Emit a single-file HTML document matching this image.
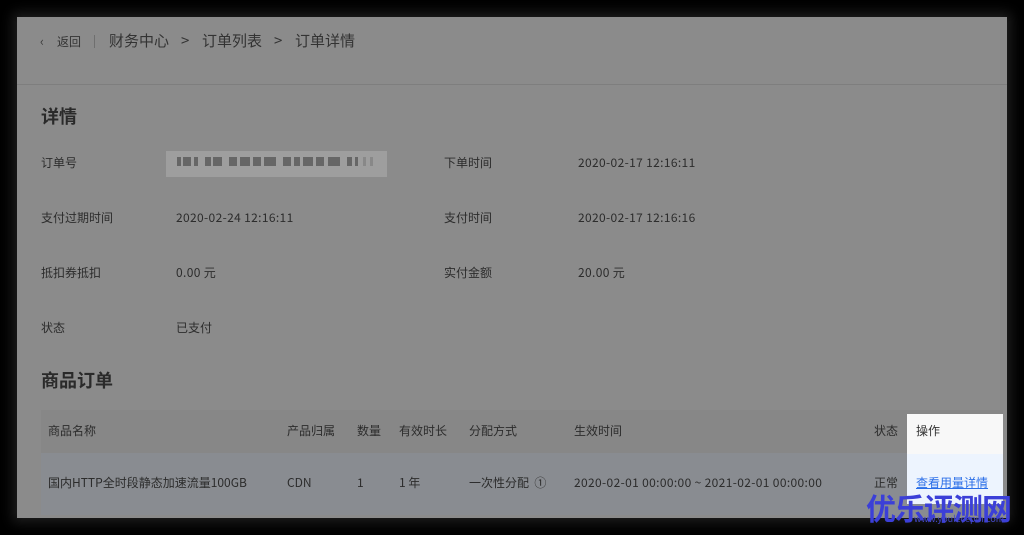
<!DOCTYPE html>
<html><head><meta charset="utf-8"><style>
*{margin:0;padding:0;box-sizing:border-box}
body{width:1024px;height:535px;background:#000;position:relative;overflow:hidden;font-family:"Noto Sans CJK SC","Liberation Sans",sans-serif;color:#2c2c2c}
.page{position:absolute;left:17px;top:17px;width:990px;height:501px;background:#8b8b8b;box-shadow:0 0 12px 4px rgba(40,40,40,.8)}
.a{position:absolute;white-space:nowrap;line-height:18px}
.s12{font-size:12px}
.n{letter-spacing:0.35px}
.r{position:absolute;top:157px;height:9px;background:#666}
</style></head><body>
<div class="page"></div>
<div class="a" style="left:40px;top:32px;font-size:13px;color:#3a3a3a">&#8249;</div>
<div class="a s12" style="left:57px;top:33px;color:#333">返回</div>
<div class="a" style="left:94px;top:35px;width:1px;height:13px;background:#6f6f6f"></div>
<div class="a" style="left:109px;top:32px;font-size:15px;color:#333">财务中心</div>
<div class="a" style="left:181px;top:32px;font-size:15px;color:#333">&gt;</div>
<div class="a" style="left:202px;top:32px;font-size:15px;color:#333">订单列表</div>
<div class="a" style="left:274px;top:32px;font-size:15px;color:#333">&gt;</div>
<div class="a" style="left:295px;top:32px;font-size:15px;color:#333">订单详情</div>
<div class="a" style="left:17px;top:84px;width:990px;height:1px;background:#7e7e7e"></div>
<div class="a" style="left:41px;top:105px;font-size:18px;font-weight:bold;color:#2a2a2a;line-height:22px">详情</div>
<div class="a" style="left:166px;top:151px;width:221px;height:26px;background:#9e9e9e"></div>
<div class="r" style="left:177px;width:4px"></div><div class="r" style="left:183px;width:8px"></div><div class="r" style="left:194px;width:4px"></div>
<div class="r" style="left:205px;width:6px"></div><div class="r" style="left:213px;width:9px"></div>
<div class="r" style="left:229px;width:8px"></div><div class="r" style="left:240px;width:10px"></div><div class="r" style="left:253px;width:8px"></div><div class="r" style="left:264px;width:12px"></div>
<div class="r" style="left:283px;width:8px"></div><div class="r" style="left:294px;width:6px"></div><div class="r" style="left:303px;width:10px"></div><div class="r" style="left:316px;width:8px"></div><div class="r" style="left:328px;width:12px"></div>
<div class="r" style="left:347px;width:5px"></div><div class="r" style="left:355px;width:3px"></div>
<div class="r" style="left:363px;width:3px;background:#888"></div><div class="r" style="left:370px;width:3px;background:#888"></div>
<div class="a s12" style="left:41px;top:154px">订单号</div>
<div class="a s12" style="left:444px;top:154px">下单时间</div>
<div class="a s12 n" style="left:578px;top:154px">2020-02-17 12:16:11</div>
<div class="a s12" style="left:41px;top:209px">支付过期时间</div>
<div class="a s12 n" style="left:176px;top:209px">2020-02-24 12:16:11</div>
<div class="a s12" style="left:444px;top:209px">支付时间</div>
<div class="a s12 n" style="left:578px;top:209px">2020-02-17 12:16:16</div>
<div class="a s12" style="left:41px;top:264px">抵扣券抵扣</div>
<div class="a s12 n" style="left:176px;top:264px">0.00 元</div>
<div class="a s12" style="left:444px;top:264px">实付金额</div>
<div class="a s12 n" style="left:578px;top:264px">20.00 元</div>
<div class="a s12" style="left:41px;top:319px">状态</div>
<div class="a s12" style="left:176px;top:319px">已支付</div>
<div class="a" style="left:41px;top:369px;font-size:18px;font-weight:bold;color:#2a2a2a;line-height:22px">商品订单</div>
<div class="a" style="left:41px;top:410px;width:962px;height:43px;background:#878787"></div>
<div class="a" style="left:41px;top:453px;width:962px;height:62px;background:#898c91"></div>
<div class="a" style="left:907px;top:414px;width:96px;height:40px;background:#f8f8f8"></div>
<div class="a" style="left:907px;top:454px;width:96px;height:50px;background:#edf4fe"></div>
<div class="a s12" style="left:48px;top:422px">商品名称</div>
<div class="a s12" style="left:287px;top:422px">产品归属</div>
<div class="a s12" style="left:357px;top:422px">数量</div>
<div class="a s12" style="left:399px;top:422px">有效时长</div>
<div class="a s12" style="left:469px;top:422px">分配方式</div>
<div class="a s12" style="left:574px;top:422px">生效时间</div>
<div class="a s12" style="left:874px;top:422px">状态</div>
<div class="a s12" style="left:916px;top:422px;color:#333">操作</div>
<div class="a s12" style="left:48px;top:474px">国内HTTP全时段静态加速流量100GB</div>
<div class="a s12" style="left:287px;top:474px">CDN</div>
<div class="a s12" style="left:357px;top:474px">1</div>
<div class="a s12" style="left:399px;top:474px">1 年</div>
<div class="a s12" style="left:469px;top:474px">一次性分配 &nbsp;①</div>
<div class="a s12 n" style="left:574px;top:474px">2020-02-01 00:00:00 ~ 2021-02-01 00:00:00</div>
<div class="a s12" style="left:874px;top:474px">正常</div>
<div class="a s12" style="left:916px;top:474px;color:#2a6ee8;text-decoration:underline">查看用量详情</div>
<div class="a" style="left:866px;top:490px;font-size:30px;font-weight:bold;color:#3b3fd8;line-height:34px;letter-spacing:-1px">优乐评测网</div>
<div class="a" style="left:914px;top:514px;font-size:9px;color:#4448c8;line-height:10px">www.youlecepin.com</div>
</body></html>
